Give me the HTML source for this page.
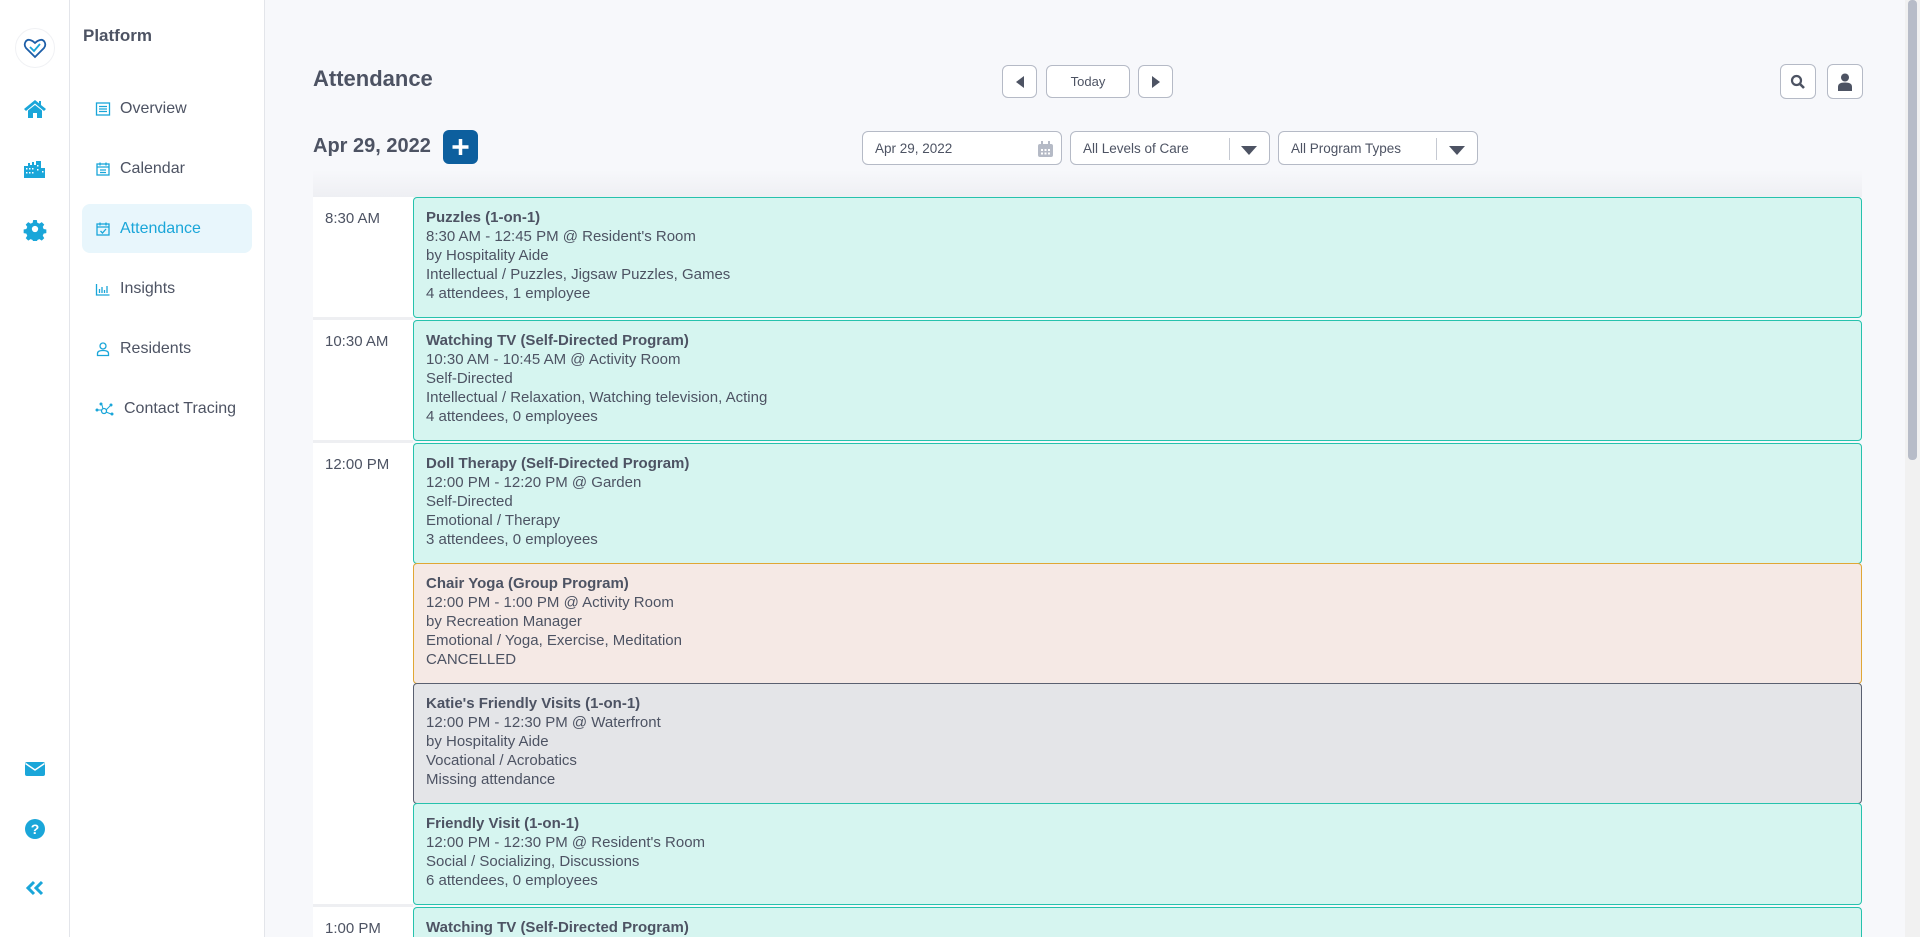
<!DOCTYPE html>
<html style="height:937px;overflow:hidden"><head><meta charset="utf-8"><style>
*{box-sizing:border-box;margin:0;padding:0}
body{width:1920px;height:937px;overflow:hidden;background:#f7f8fb;font-family:"Liberation Sans",sans-serif;color:#4d5363;position:relative}
.rail{position:absolute;left:0;top:0;width:70px;height:937px;background:#fff;border-right:1px solid #e3e5ea}
.side{position:absolute;left:70px;top:0;width:195px;height:937px;background:#fff;border-right:1px solid #e3e5ea}
.ri{position:absolute;left:23px;width:24px;height:24px}
.nav{position:absolute;left:12px;width:170px;height:49px;border-radius:8px;display:flex;align-items:center;padding-left:13px;font-size:16px;color:#4d5363}
.nav svg{margin-right:9px}
.nav.act{background:#e8f6fc;color:#1aa6d9}
.btn{position:absolute;background:#fff;border:1px solid #b5bac6;border-radius:6px;display:flex;align-items:center;justify-content:center;font-size:13px;color:#4d5363}
.sel{position:absolute;top:131px;height:34px;background:#fff;border:1px solid #b5bac6;border-radius:6px;font-size:13.5px;padding-left:12px;display:flex;align-items:center;color:#4d5363}
.time{position:absolute;left:313px;width:100px;background:#fff;font-size:15px;padding:13px 0 0 12px}
.ev{position:absolute;left:413px;width:1449px;border:1px solid #26c2ad;background:#d6f5f0;border-radius:4px;padding:10px 0 0 12px;font-size:15px;line-height:19px}
.ev b{font-weight:bold;display:block}
.can{background:#f5e9e5;border-color:#e0a735}
.mis{background:#e4e5e8;border-color:#5a6070}
</style></head><body>
<div class="rail">
 <div style="position:absolute;left:15px;top:28px;width:40px;height:40px;border-radius:50%;border:1px solid #f0f1f4"></div>
 <svg style="position:absolute;left:23px;top:36px" width="24" height="24" viewBox="0 0 24 24" fill="none" stroke-width="1.8"><path d="M12 21 L3 12 C0 8 3 3 7 4 C9 4.5 11 6 12 7 C13 6 15 4.5 17 4 C21 3 24 8 21 12 Z" stroke="#1e5fa8"/><path d="M7 11 L11 15 L17 8" stroke="#1aa6d9"/></svg>
 <svg class="ri" style="top:97px" viewBox="0 0 24 24" fill="#1aa6d9"><path d="M12 3 L1 12 L3 14 L12 6.5 L21 14 L23 12 L18 8 V4 H16 V6.3 Z M5 13.5 V21 H10 V16 H14 V21 H19 V13.5 L12 8 Z"/></svg>
 <svg class="ri" style="top:157px" viewBox="0 0 24 24" fill="#1aa6d9"><path d="M1 9 H5 V6 H7 V8 H9 V5 H11 V8 H13 V4 H18 V11 H22 V21 H1 Z" /><g fill="#fff"><rect x="3" y="11" width="1.5" height="1.5"/><rect x="6" y="11" width="1.5" height="1.5"/><rect x="9" y="11" width="1.5" height="1.5"/><rect x="3" y="15" width="1.5" height="1.5"/><rect x="6" y="15" width="1.5" height="1.5"/><rect x="9" y="15" width="1.5" height="1.5"/><rect x="14" y="8" width="1.5" height="1.5"/><rect x="14" y="12" width="1.5" height="1.5"/><rect x="19" y="14" width="1.5" height="1.5"/></g></svg>
 <svg class="ri" style="top:217px" viewBox="0 0 24 24" fill="#1aa6d9"><path d="M10 2h4l.6 3 2.3 1 2.6-1.7 2.8 2.8-1.7 2.6 1 2.3 3 .6v4l-3 .6-1 2.3 1.7 2.6-2.8 2.8-2.6-1.7-2.3 1-.6 3h-4l-.6-3-2.3-1-2.6 1.7-2.8-2.8 1.7-2.6-1-2.3-3-.6v-4l3-.6 1-2.3-1.7-2.6 2.8-2.8 2.6 1.7 2.3-1z M12 8.5a3.5 3.5 0 1 0 0 7a3.5 3.5 0 1 0 0-7z" fill-rule="evenodd" transform="translate(1.2 1.2) scale(.9)"/></svg>
 <svg class="ri" style="top:757px" viewBox="0 0 24 24" fill="#1aa6d9"><rect x="2" y="5" width="20" height="14" rx="2"/><path d="M2.5 6.5 L12 13 L21.5 6.5" stroke="#fff" stroke-width="1.5" fill="none"/></svg>
 <svg class="ri" style="top:817px" viewBox="0 0 24 24"><circle cx="12" cy="12" r="10" fill="#1aa6d9"/><text x="12" y="17" text-anchor="middle" font-size="14" font-weight="bold" fill="#fff" font-family="Liberation Sans">?</text></svg>
 <svg class="ri" style="top:876px" viewBox="0 0 24 24" fill="none" stroke="#1aa6d9" stroke-width="3"><path d="M11 6 L5 12 L11 18 M19 6 L13 12 L19 18"/></svg>
</div>
<div class="side">
 <div style="position:absolute;left:13px;top:26px;font-size:17px;font-weight:bold;color:#4d5363">Platform</div>
 <div class="nav" style="top:84px"><svg width="16" height="16" viewBox="0 0 16 16" fill="none" stroke="#1aa6d9" stroke-width="1.3"><rect x="1.5" y="2" width="13" height="12"/><path d="M4 5.5h8M4 8h8M4 10.5h8"/></svg>Overview</div>
 <div class="nav" style="top:144px"><svg width="16" height="16" viewBox="0 0 16 16" fill="none" stroke="#1aa6d9" stroke-width="1.3"><rect x="2" y="3" width="12" height="11"/><path d="M2 6h12M5 1.5v3M11 1.5v3M5 9h6M5 11.5h6"/></svg>Calendar</div>
 <div class="nav act" style="top:204px"><svg width="16" height="16" viewBox="0 0 16 16" fill="none" stroke="#1aa6d9" stroke-width="1.3"><rect x="2" y="3" width="12" height="11"/><path d="M2 6h12M5 1.5v3M11 1.5v3M5.5 10l2 2 3.5-4"/></svg>Attendance</div>
 <div class="nav" style="top:264px"><svg width="16" height="16" viewBox="0 0 16 16" fill="none" stroke="#1aa6d9" stroke-width="1.3"><path d="M1.5 3v11h13M4.5 12V8M7 12V6M9.5 12V9M12 12V5"/></svg>Insights</div>
 <div class="nav" style="top:324px"><svg width="16" height="16" viewBox="0 0 16 16" fill="none" stroke="#1aa6d9" stroke-width="1.3"><circle cx="8" cy="5" r="3"/><path d="M2.5 14.5v-2c0-2 2-3 5.5-3s5.5 1 5.5 3v2z"/></svg>Residents</div>
 <div class="nav" style="top:384px"><svg width="20" height="16" viewBox="0 0 20 16" fill="#1aa6d9"><circle cx="2" cy="9" r="1.5"/><circle cx="9" cy="10" r="2.5" fill="none" stroke="#1aa6d9" stroke-width="1.3"/><circle cx="6" cy="3" r="1.5"/><circle cx="16" cy="4" r="1.5"/><circle cx="17" cy="13" r="1.5"/><path d="M3 9h3M7 4l1 4M11 9l4-4M11 11l5 2" stroke="#1aa6d9" stroke-width="1"/></svg>Contact Tracing</div>
</div>
<div style="position:absolute;left:1905px;top:0;width:15px;height:937px;background:#f1f1f1"><div style="position:absolute;left:3px;top:0;width:9px;height:460px;background:#b7bcc8;border-radius:4px"></div></div>

<div style="position:absolute;left:313px;top:66px;font-size:22px;font-weight:bold;color:#4d5363">Attendance</div>
<div class="btn" style="left:1002px;top:65px;width:35px;height:33px"><svg width="10" height="14"><path d="M9 1 L1 7 L9 13Z" fill="#4d5363"/></svg></div>
<div class="btn" style="left:1046px;top:65px;width:84px;height:33px">Today</div>
<div class="btn" style="left:1138px;top:65px;width:35px;height:33px"><svg width="10" height="14"><path d="M1 1 L9 7 L1 13Z" fill="#4d5363"/></svg></div>
<div class="btn" style="left:1780px;top:64px;width:36px;height:35px"><svg width="16" height="16" viewBox="0 0 16 16"><circle cx="6.5" cy="6.5" r="4.5" fill="none" stroke="#4d5363" stroke-width="2.2"/><path d="M10 10l4 4" stroke="#4d5363" stroke-width="2.6"/></svg></div>
<div class="btn" style="left:1827px;top:64px;width:36px;height:35px"><svg width="14" height="18" viewBox="0 0 14 18" fill="#4d5363"><circle cx="7" cy="4.5" r="4"/><path d="M0 18v-4c0-3 2-4.5 7-4.5s7 1.5 7 4.5v4z"/></svg></div>

<div style="position:absolute;left:313px;top:135px;font-size:20px;font-weight:bold;color:#4d5363">Apr 29, 2022</div>
<div style="position:absolute;left:443px;top:130px;width:35px;height:34px;background:#0d5f9e;border-radius:6px"><svg width="35" height="34"><path d="M17.5 9v16M9.5 17h16" stroke="#fff" stroke-width="3.5"/></svg></div>
<div class="sel" style="left:862px;width:200px">Apr 29, 2022<svg style="position:absolute;right:8px;top:9px" width="15" height="16" viewBox="0 0 15 16" fill="#b5bac6"><rect x="0" y="3" width="15" height="13" rx="2"/><rect x="3" y="0" width="2" height="4"/><rect x="10" y="0" width="2" height="4"/><g fill="#fff"><rect x="3" y="8" width="2" height="2"/><rect x="6.5" y="8" width="2" height="2"/><rect x="10" y="8" width="2" height="2"/><rect x="3" y="11.5" width="2" height="2"/><rect x="6.5" y="11.5" width="2" height="2"/><rect x="10" y="11.5" width="2" height="2"/></g></svg></div>
<div class="sel" style="left:1070px;width:200px">All Levels of Care<div style="position:absolute;left:158px;top:6px;width:1px;height:22px;background:#c5c9d2"></div><svg style="position:absolute;right:12px;top:13px" width="16" height="10"><path d="M0 1h16L8 10z" fill="#4d5363"/></svg></div>
<div class="sel" style="left:1278px;width:200px">All Program Types<div style="position:absolute;left:157px;top:6px;width:1px;height:22px;background:#c5c9d2"></div><svg style="position:absolute;right:12px;top:13px" width="16" height="10"><path d="M0 1h16L8 10z" fill="#4d5363"/></svg></div>

<div style="position:absolute;left:313px;top:170px;width:1549px;height:27px;background:linear-gradient(#f7f8fb,#eeeff3)"></div>
<div style="position:absolute;left:313px;top:197px;width:100px;height:740px;background:#eeeff2"></div>
<div class="time" style="top:197px;height:120px">8:30 AM</div>
<div class="time" style="top:320px;height:120px">10:30 AM</div>
<div class="time" style="top:443px;height:461px">12:00 PM</div>
<div class="time" style="top:907px;height:30px">1:00 PM</div>

<div class="ev" style="top:197px;height:121px"><b>Puzzles (1-on-1)</b>8:30 AM - 12:45 PM @ Resident's Room<br>by Hospitality Aide<br>Intellectual / Puzzles, Jigsaw Puzzles, Games<br>4 attendees, 1 employee</div>
<div class="ev" style="top:320px;height:121px"><b>Watching TV (Self-Directed Program)</b>10:30 AM - 10:45 AM @ Activity Room<br>Self-Directed<br>Intellectual / Relaxation, Watching television, Acting<br>4 attendees, 0 employees</div>
<div class="ev" style="top:443px;height:121px"><b>Doll Therapy (Self-Directed Program)</b>12:00 PM - 12:20 PM @ Garden<br>Self-Directed<br>Emotional / Therapy<br>3 attendees, 0 employees</div>
<div class="ev can" style="top:563px;height:121px"><b>Chair Yoga (Group Program)</b>12:00 PM - 1:00 PM @ Activity Room<br>by Recreation Manager<br>Emotional / Yoga, Exercise, Meditation<br>CANCELLED</div>
<div class="ev mis" style="top:683px;height:121px"><b>Katie's Friendly Visits (1-on-1)</b>12:00 PM - 12:30 PM @ Waterfront<br>by Hospitality Aide<br>Vocational / Acrobatics<br>Missing attendance</div>
<div class="ev" style="top:803px;height:102px"><b>Friendly Visit (1-on-1)</b>12:00 PM - 12:30 PM @ Resident's Room<br>Social / Socializing, Discussions<br>6 attendees, 0 employees</div>
<div class="ev" style="top:907px;height:30px;border-bottom:none;border-radius:4px 4px 0 0"><b>Watching TV (Self-Directed Program)</b></div>
</body></html>
